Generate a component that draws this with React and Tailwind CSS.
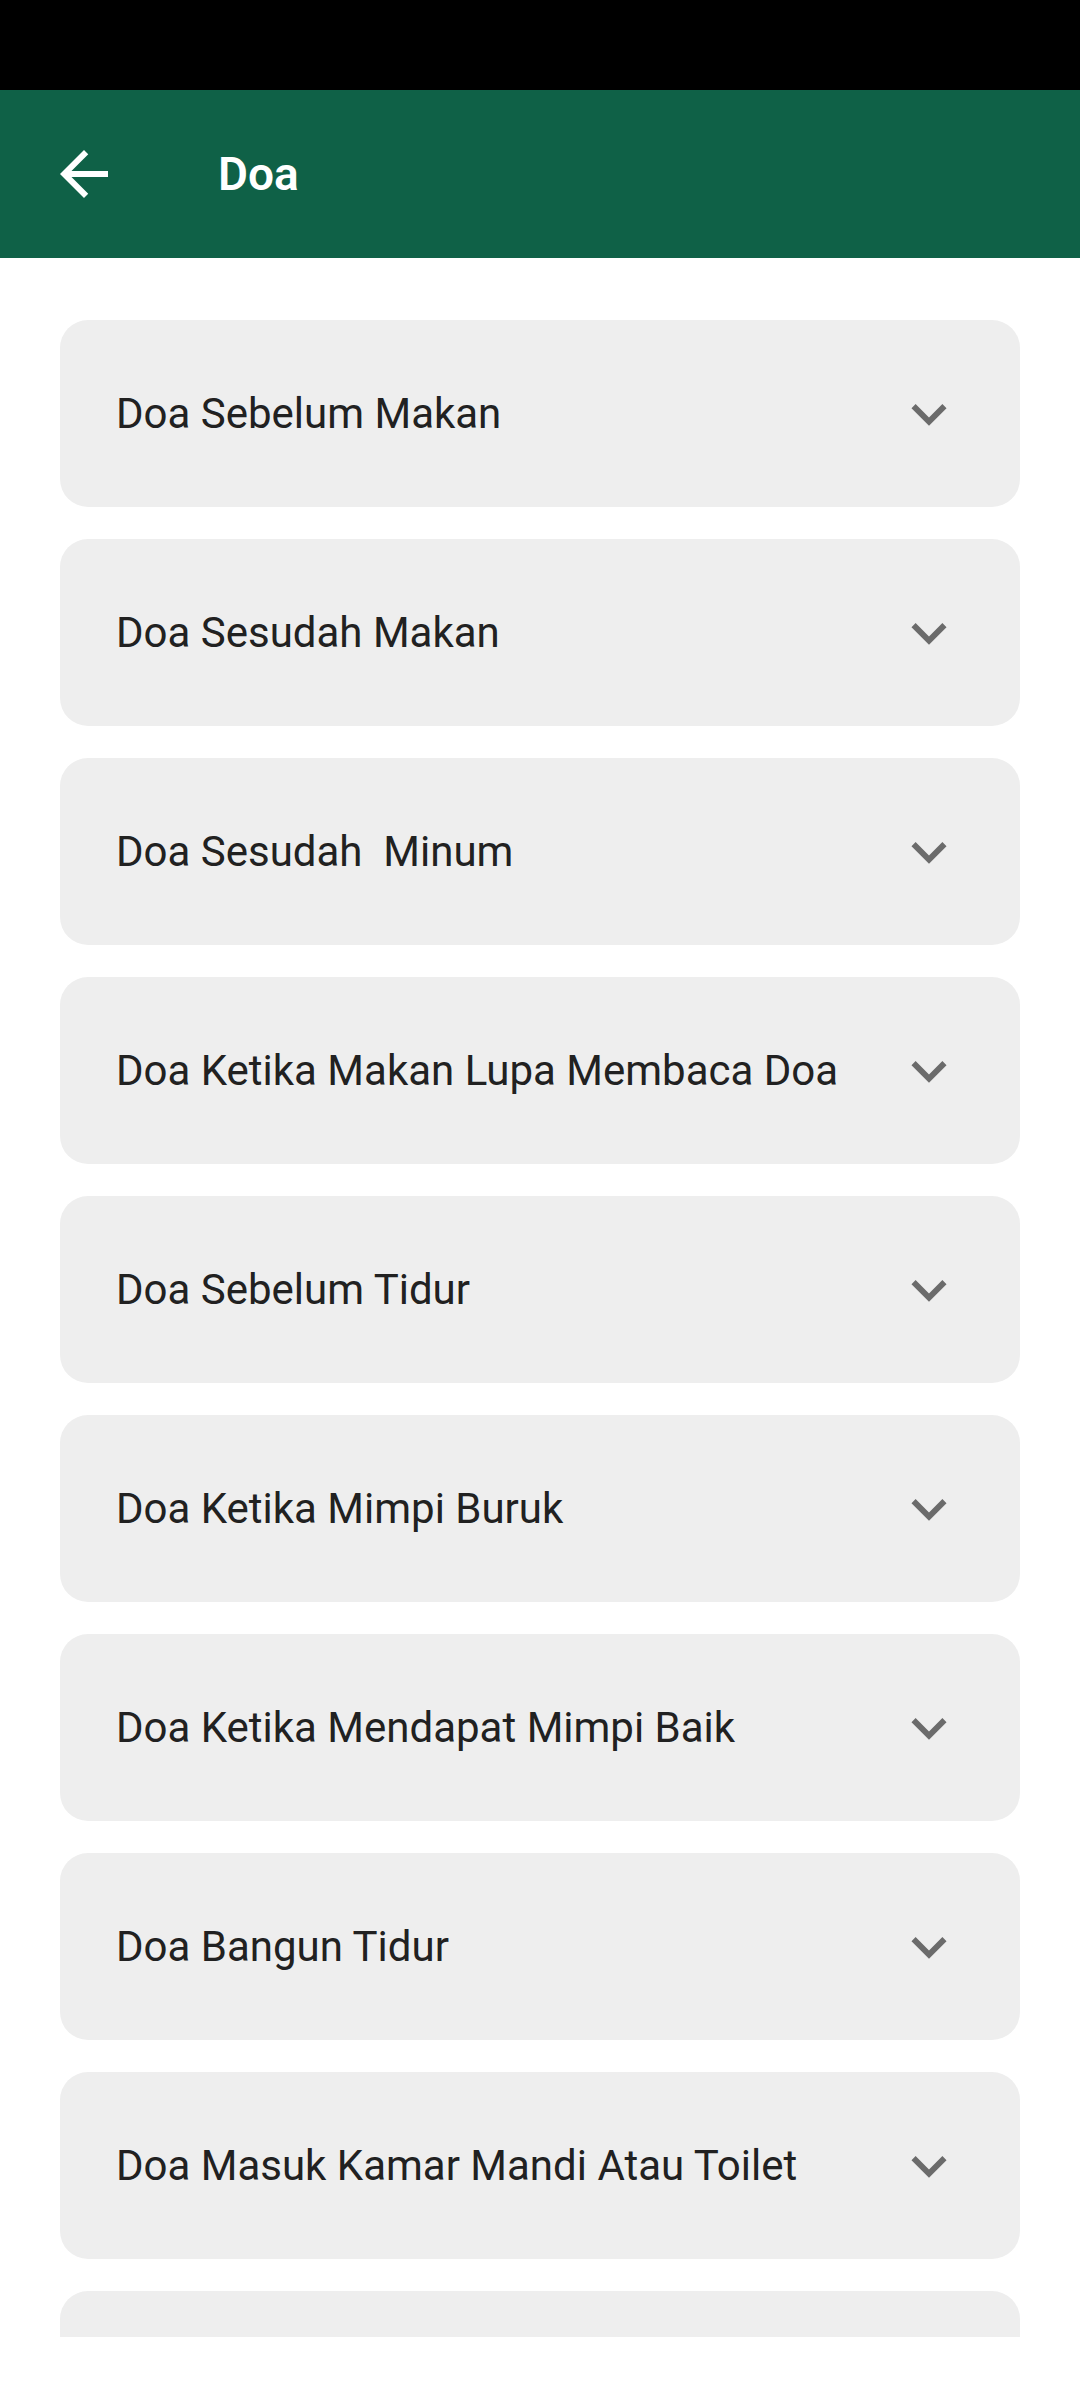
import React from 'react';

const daftarDoa = [
  'Doa Sebelum Makan',
  'Doa Sesudah Makan',
  'Doa Sesudah  Minum',
  'Doa Ketika Makan Lupa Membaca Doa',
  'Doa Sebelum Tidur',
  'Doa Ketika Mimpi Buruk',
  'Doa Ketika Mendapat Mimpi Baik',
  'Doa Bangun Tidur',
  'Doa Masuk Kamar Mandi Atau Toilet',
  '', // kartu berikutnya terpotong di bawah layar
];

const IconBack = () => (
  <svg width="72" height="72" viewBox="0 0 24 24" fill="#ffffff">
    <path d="M20 11H7.83l5.59-5.59L12 4l-8 8 8 8 1.41-1.41L7.83 13H20v-2z" />
  </svg>
);

const IconExpand = () => (
  <svg width="70" height="70" viewBox="0 0 24 24" fill="#6b6b6b">
    <path d="M16.59 8.59L12 13.17 7.41 8.59 6 10l6 6 6-6z" />
  </svg>
);

export default function App() {
  return (
    <div className="w-[1080px] h-[2400px] bg-white flex flex-col overflow-hidden" style={{ fontFamily: 'Roboto, "Noto Sans", sans-serif' }}>
      <div className="h-[90px] bg-black shrink-0" />

      <div className="h-[168px] bg-[#0f6147] shrink-0 flex items-center pl-[48px]">
        <IconBack />
        <h1 className="ml-[98px] text-white text-[46px] font-semibold">Doa</h1>
      </div>

      <div className="h-[2079px] overflow-hidden shrink-0">
        <div className="pt-[62px] px-[60px] flex flex-col gap-[32px]">
          {daftarDoa.map((judul, i) => (
            <div
              key={i}
              className="h-[187px] shrink-0 bg-[#eeeeee] rounded-[28px] flex items-center justify-between pl-[56px] pr-[56px]"
            >
              <span className="text-[42px] text-[#212121] whitespace-pre">{judul}</span>
              <IconExpand />
            </div>
          ))}
        </div>
      </div>

      <div className="flex-1 bg-white" />
    </div>
  );
}
